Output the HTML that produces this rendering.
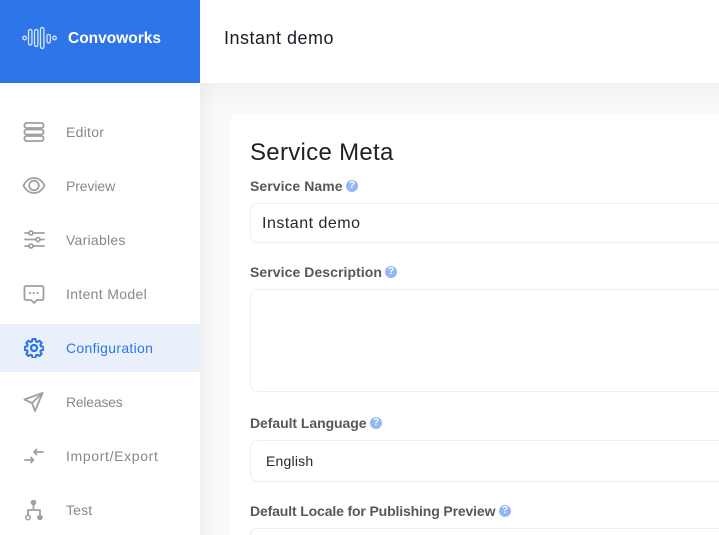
<!DOCTYPE html>
<html><head><meta charset="utf-8"><style>
html,body{margin:0;padding:0;width:719px;height:535px;overflow:hidden}
body{position:relative;font-family:"Liberation Sans",sans-serif}
#bg{position:absolute;left:200px;top:83px;width:519px;height:452px;background:linear-gradient(rgba(0,0,0,.028),rgba(0,0,0,0) 26px),linear-gradient(90deg,rgba(0,0,0,.028),rgba(0,0,0,0) 20px),#f9f9f9}
#clip{position:absolute;left:0;top:0;width:719px;height:535px;overflow:hidden}
.t{position:absolute;white-space:nowrap;line-height:20px}
.nav{font-size:14px;color:#88888c;left:66px}
.lab{font-size:14px;font-weight:bold;color:#57575c;left:250px}
.box{position:absolute;left:250px;width:469px;background:#fff;border:1px solid #eceef0;border-right:0;border-radius:8px 0 0 8px;box-sizing:border-box}
svg{position:absolute;overflow:hidden}
.i{fill:none;stroke:#a0a0a0;stroke-width:1.8;stroke-linecap:round;stroke-linejoin:round}
.q{position:absolute;width:12px;height:12px;border-radius:50%;background:#93b6f5;color:#fff;font-size:10px;font-weight:bold;line-height:12px;text-align:center}
</style></head><body><div id="clip">
<div id="bg"></div>
<div style="position:absolute;left:200px;top:0;width:519px;height:83px;background:#fff"></div>
<div style="position:absolute;left:0;top:0;width:200px;height:535px;background:#fff"></div>
<div style="position:absolute;left:0;top:0;width:200px;height:83px;background:#2e75ea"></div>
<svg style="left:0;top:0" width="200" height="83" fill="none" stroke="#d8e6fb" stroke-width="1.3">
<circle cx="24.500" cy="38" r="1.800"/><rect x="28.500" y="29.500" width="3.400" height="15.500" rx="1.700"/><rect x="34.500" y="29.500" width="3.400" height="17" rx="1.700"/><rect x="40.500" y="27.500" width="3.400" height="21" rx="1.700"/><rect x="47" y="34.500" width="3.400" height="8.500" rx="1.700"/><circle cx="54.500" cy="38" r="1.800"/>
</svg>
<div class="t" style="left:68px;top:29px;font-size:15.5px;font-weight:bold;color:#fff">Convoworks</div>
<div class="t" style="left:224px;top:28px;font-size:18px;color:#1a1a24;letter-spacing:.5px">Instant demo</div>

<div style="position:absolute;left:0;top:324px;width:200px;height:48px;background:#e9f0fc"></div>

<svg class="i" style="left:0;top:0" width="60" height="535">
<rect x="24.500" y="123" width="19" height="5" rx="2"/><rect x="24.500" y="129.500" width="19" height="5" rx="2"/><rect x="24.500" y="136" width="19" height="5" rx="2"/>
<path d="M23.500 185.500c5-10 16-10 21 0c-5 10-16 10-21 0z"/><circle cx="34" cy="185.500" r="4.800"/>
<path d="M25 233h4M33 233h11M25 239.500h11M40 239.500h4M25 246h4M33 246h11"/><circle cx="31" cy="233" r="2"/><circle cx="38" cy="239.500" r="2"/><circle cx="31" cy="246" r="2"/>
<path d="M26 286h16a1.500 1.500 0 0 1 1.500 1.500v11a1.500 1.500 0 0 1-1.500 1.500h-5l-3 3l-3-3h-5a1.500 1.500 0 0 1-1.500-1.500v-11a1.500 1.500 0 0 1 1.500-1.500z"/>
<path d="M24.500 399.500l18-6.500l-7.500 18l-3-8z"/><path d="M42.500 393l-10.500 10"/>
<path d="M25 460h8.500M31 457.500l2.500 2.500l-2.500 2.500M43 452h-9M36.500 449.500l-2.500 2.500l2.500 2.500"/>
<path d="M33.500 505v5M28 515v-5h12v5"/>
</svg>
<svg style="left:0;top:0" width="60" height="535" fill="#a0a0a0"><circle cx="30" cy="293" r="1.100"/><circle cx="33.800" cy="293" r="1.100"/><circle cx="37.600" cy="293" r="1.100"/><circle cx="33.500" cy="502.500" r="2.800"/><circle cx="40" cy="517.500" r="2.800"/></svg>
<svg style="left:0;top:0" width="60" height="535" fill="none" stroke="#a0a0a0" stroke-width="1.500"><circle cx="28" cy="517.500" r="2.300"/></svg>
<svg style="left:24px;top:338px" width="20" height="20" viewBox="0 0 24 24" fill="none" stroke="#2e75ea" stroke-width="2.800" stroke-linejoin="round"><circle cx="12" cy="12" r="3.600"/><path d="M10 1.500h4l.7 3.200 1.900.8 2.800-1.700 2.800 2.800-1.700 2.800.8 1.900 3.200.7v4l-3.200.7-.8 1.900 1.700 2.800-2.800 2.800-2.800-1.700-1.900.8-.7 3.200h-4l-.7-3.200-1.900-.8-2.800 1.700-2.800-2.800 1.700-2.800-.8-1.900-3.200-.7v-4l3.200-.7.8-1.900-1.700-2.800 2.800-2.800 2.800 1.700 1.900-.8z" transform="translate(12 12) scale(.9) translate(-12 -13.500)"/></svg>

<div class="t nav" style="top:122px;letter-spacing:.27px">Editor</div>
<div class="t nav" style="top:176px;letter-spacing:-.1px">Preview</div>
<div class="t nav" style="top:230px;letter-spacing:.26px">Variables</div>
<div class="t nav" style="top:284px;letter-spacing:.33px">Intent Model</div>
<div class="t nav" style="top:338px;color:#2e75ea;letter-spacing:.3px">Configuration</div>
<div class="t nav" style="top:392px;letter-spacing:-.24px">Releases</div>
<div class="t nav" style="top:446px;letter-spacing:.65px">Import/Export</div>
<div class="t nav" style="top:500px;letter-spacing:.17px">Test</div>

<div style="position:absolute;left:230px;top:113px;width:489px;height:422px;background:#fff;border-radius:8px 0 0 0"></div>
<div class="t" style="left:250px;top:141px;font-size:24px;line-height:24px;color:#212126;letter-spacing:.3px">Service Meta</div>

<div class="t lab" style="top:176px;letter-spacing:.06px">Service Name</div><div class="q" style="left:346px;top:180px">?</div>
<div class="box" style="top:203px;height:40px"></div>
<div class="t" style="left:262px;top:215px;font-size:16px;line-height:18px;color:#27272c;letter-spacing:.5px">Instant demo</div>

<div class="t lab" style="top:262px;letter-spacing:.07px">Service Description</div><div class="q" style="left:385px;top:266px">?</div>
<div class="box" style="top:289px;height:103px"></div>

<div class="t lab" style="top:413px;letter-spacing:-.06px">Default Language</div><div class="q" style="left:370px;top:417px">?</div>
<div class="box" style="top:440px;height:42px"></div>
<div class="t" style="left:266px;top:451px;font-size:14px;color:#27272c;letter-spacing:.2px">English</div>

<div class="t lab" style="top:501px;letter-spacing:-.14px">Default Locale for Publishing Preview</div><div class="q" style="left:499px;top:505px">?</div>
<div class="box" style="top:528px;height:7px;border-bottom:0;border-radius:8px 0 0 0"></div>
</div></body></html>
